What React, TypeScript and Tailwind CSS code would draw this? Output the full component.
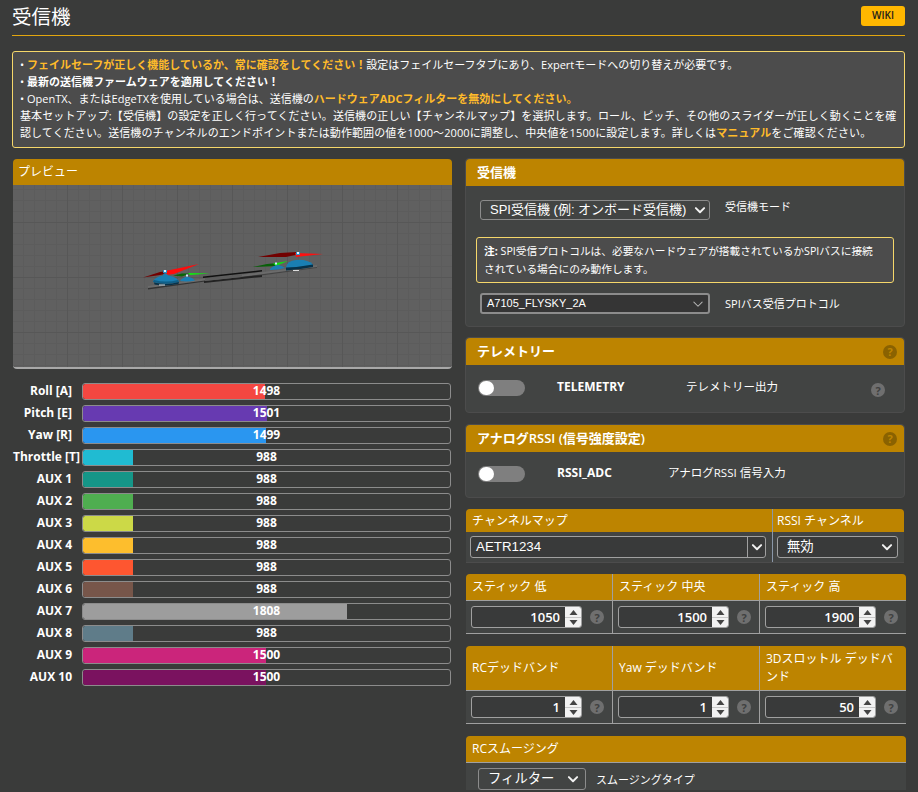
import React from "react";

const FONT = "font-['Open_Sans','Noto_Sans_CJK_JP',sans-serif]";

function Help({ dark = false, className = "" }: { dark?: boolean; className?: string }) {
  return (
    <span
      className={`flex h-[14px] w-[14px] shrink-0 items-center justify-center rounded-full text-[11px] leading-none font-bold ${
        dark ? "bg-[#8a6200] text-[#bd8400]" : "bg-[#6f6f6f] text-[#3f4140]"
      } ${className}`}
    >
      ?
    </span>
  );
}

function Chevron({ thin = false, className = "" }: { thin?: boolean; className?: string }) {
  return (
    <svg viewBox="0 0 16 16" className={`pointer-events-none h-[12px] w-[12px] ${className}`} fill="none">
      <path
        d="M2.5 5.5 8 11l5.5-5.5"
        stroke={thin ? "#b5b5b5" : "#f2f2f2"}
        strokeWidth={thin ? 1.4 : 2.6}
        strokeLinecap="round"
        strokeLinejoin="round"
      />
    </svg>
  );
}

const bars: { label: string; value: number; pct: number; color: string }[] = [
  { label: "Roll [A]", value: 1498, pct: 49.7, color: "bg-[#f44741]" },
  { label: "Pitch [E]", value: 1501, pct: 50.1, color: "bg-[#673ab1]" },
  { label: "Yaw [R]", value: 1499, pct: 49.8, color: "bg-[#2a96f0]" },
  { label: "Throttle [T]", value: 988, pct: 13.5, color: "bg-[#20bbd2]" },
  { label: "AUX 1", value: 988, pct: 13.5, color: "bg-[#159688]" },
  { label: "AUX 2", value: 988, pct: 13.5, color: "bg-[#4fae50]" },
  { label: "AUX 3", value: 988, pct: 13.5, color: "bg-[#ccd947]" },
  { label: "AUX 4", value: 988, pct: 13.5, color: "bg-[#fdbe2d]" },
  { label: "AUX 5", value: 988, pct: 13.5, color: "bg-[#fe5630]" },
  { label: "AUX 6", value: 988, pct: 13.5, color: "bg-[#77564a]" },
  { label: "AUX 7", value: 1808, pct: 71.8, color: "bg-[#9d9d9d]" },
  { label: "AUX 8", value: 988, pct: 13.5, color: "bg-[#5f7c89]" },
  { label: "AUX 9", value: 1500, pct: 49.9, color: "bg-[#cb257b]" },
  { label: "AUX 10", value: 1500, pct: 49.9, color: "bg-[#7a125f]" },
];

function Quad() {
  return (
    <svg viewBox="0 0 200 60" className="absolute left-[117px] top-[55px] h-[60px] w-[200px]">
      {/* frame */}
      <polygon points="18,46 75,38.5 75,41 18,49" fill="#6b6b6b" />
      <polygon points="18,48 75,40.5 75,41.5 18,49.5" fill="#333" />
      <polygon points="110,35 187,25 187,28 110,38" fill="#6b6b6b" />
      <polygon points="110,37 187,27 187,28 110,38.5" fill="#444" />
      <polygon points="73,36.5 132,30 132,31.5 73,38" fill="#111" />
      <polygon points="74,41 132,35 132,37 74,43" fill="#222" />
      <polygon points="75,38.5 112,34.5 112,37 75,41" fill="#5c5c5c" />
      {/* left rear prop */}
      <polygon points="13,37.5 30,32 46,30 44,32 30,35" fill="#730000" />
      <polygon points="33,31.5 69,24 44,34 36,35" fill="#ff0c0c" />
      {/* left rear motor */}
      <path d="M23 42 Q24 37 33 35.5 Q33 33 35 33 Q37 33 38 35.5 Q48 37 49 42 Q36 45 23 42Z" fill="#1a7fb3" />
      <path d="M24 40 Q36 43 48 40 L49 42 Q36 45.5 23 42Z" fill="#0f5f88" />
      <path d="M24 42.5 Q36 45.5 49 42 L48.5 44 Q36 46.5 24.5 44.5Z" fill="#07324a" />
      <rect x="33" y="30" width="4" height="3" fill="#2a92c7" />
      <rect x="34" y="30" width="2" height="2" fill="#e8f4ff" />
      <rect x="29" y="44.5" width="6" height="1" fill="#dddddd" />
      {/* left front prop and motor */}
      <polygon points="43,35.5 52,33.5 60,33.5 52,36.5" fill="#076607" />
      <polygon points="58,33 80,33.5 60,35" fill="#11e811" />
      <path d="M50 41 Q52 37.5 57 36.5 Q63 37.5 65 40.5 Q58 42 50 41Z" fill="#1a7fb3" />
      <rect x="56" y="34.5" width="2" height="2" fill="#cfeeff" />
      {/* right rear prop */}
      <polygon points="128,17 150,13 167,12 170,14 156,17" fill="#720000" />
      <polygon points="165,13 193,14 166,17" fill="#ff1010" />
      {/* right rear motor */}
      <path d="M156 27 Q157 21 166 20 Q177 19 183 24.5 L183 26 Q170 29 156 29Z" fill="#1a7fb3" />
      <path d="M156 27.5 Q170 27 183 24.5 L183 27 Q170 29.5 156 30.5Z" fill="#07324a" />
      <rect x="166" y="12" width="4" height="3" fill="#2a92c7" />
      <rect x="167" y="12" width="2" height="2" fill="#e8f4ff" />
      <rect x="163" y="30" width="6" height="1" fill="#dddddd" />
      {/* right front prop and motor */}
      <polygon points="123,27 137,24 148,23 145,26 135,26.5" fill="#076007" />
      <polygon points="143,23.5 158,21 146,26" fill="#10e010" />
      <path d="M140 29 Q143 25.5 148 25 Q153 26 155 28 Q148 30 140 30Z" fill="#1a7fb3" />
      <rect x="145" y="22.5" width="2" height="2" fill="#cfeeff" />
    </svg>
  );
}

function PanelHeader({ children, help = false }: { children: React.ReactNode; help?: boolean }) {
  return (
    <div className="flex h-[27px] items-center justify-between rounded-t-[4px] bg-[#bd8400] pl-[11px] pr-[7px] text-[13px] leading-none font-semibold text-white">
      <span>{children}</span>
      {help && <Help dark />}
    </div>
  );
}

function Panel({ children, className = "" }: { children: React.ReactNode; className?: string }) {
  return <div className={`w-[440px] rounded-[4px] border border-[#4c4c4c] bg-[#424443] ${className}`}>{children}</div>;
}

function Toggle() {
  return (
    <span className="flex h-[16px] w-[47px] shrink-0 items-center rounded-full bg-[#7f7f7f] pl-[1px]">
      <span className="h-[14px] w-[15px] rounded-full bg-white" />
    </span>
  );
}

function SwitchRow({ name, desc, nameW, help = false, pt }: { name: string; desc: string; nameW: string; help?: boolean; pt: string }) {
  return (
    <div className={`flex items-start pl-[12px] ${pt}`}>
      <Toggle />
      <span className={`-mt-[1px] ml-[32px] ${nameW} text-[12px] leading-[16px] font-bold text-white`}>{name}</span>
      <span className="-mt-[1px] text-[11.5px] leading-[16px] text-white">{desc}</span>
      {help && <Help className="ml-auto mr-[19px] mt-[3px]" />}
    </div>
  );
}

function NumberCell({ value, border = false }: { value: number; border?: boolean }) {
  return (
    <div className={`flex flex-1 items-center gap-[8px] pl-[5px] ${border ? "border-l border-[#a0a0a0]" : ""}`}>
      <div className="flex h-[22px] w-[111px] items-center justify-end overflow-hidden rounded-[3px] border border-[#a0a0a0] bg-[#393a3a] text-[13px] leading-none font-['Open_Sans',sans-serif] font-semibold text-white">
        <span className="pr-[5px]">{value}</span>
        <span className="flex h-full w-[16px] shrink-0 flex-col items-center justify-center gap-[2px] bg-[#f2f2f2]">
          <svg viewBox="0 0 8 5" className="h-[5px] w-[9px]"><path d="M4 0l4 5H0z" fill="#444" /></svg>
          <span className="h-px w-full bg-[#c8c8c8]" />
          <svg viewBox="0 0 8 5" className="h-[5px] w-[9px]"><path d="M4 5l4-5H0z" fill="#444" /></svg>
        </span>
      </div>
      <Help />
    </div>
  );
}

function NumberTable({ heads, values, headH }: { heads: string[]; values: number[]; headH: string }) {
  return (
    <div className="ml-[1px] w-[440px] overflow-hidden rounded-t-[4px] border-b border-[#a0a0a0] bg-[#424443]">
      <div className={`flex ${headH} border-b border-[#a0a0a0] bg-[#bd8400]`}>
        {heads.map((h, i) => (
          <div
            key={h}
            className={`flex flex-1 items-center pl-[6px] pr-[3px] text-[12px] leading-[18px] text-white ${i ? "border-l border-[#a0a0a0]" : ""}`}
          >
            {h}
          </div>
        ))}
      </div>
      <div className="flex h-[32px]">
        {values.map((v, i) => (
          <NumberCell key={i} value={v} border={i > 0} />
        ))}
      </div>
    </div>
  );
}

export default function App() {
  return (
    <div className={`h-[792px] w-[918px] overflow-hidden bg-[#3a3b3a] ${FONT}`}>
      <div className="ml-[12px] mr-[13px] flex h-[36px] items-center justify-between border-b border-[#e2a60e] pb-[2px]">
        <h1 className="text-[19.5px] leading-none font-normal text-white">受信機</h1>
        <span className="mb-[2px] flex h-[20px] w-[44px] items-center justify-center rounded-[3px] bg-[#ffb700] text-[10px] font-semibold text-[#1b1b1b]">
          WIKI
        </span>
      </div>

      <div className="ml-[12px] mr-[13px] mt-[15px] h-[97px] rounded-[3px] border border-[#f5d76a] bg-[#4c4c4c] px-[7px] pt-[4px] text-[11px] leading-[17px] text-white">
        <p className="whitespace-nowrap">
          {"• "}<b className="text-[#ffbb2a]">フェイルセーフが正しく機能しているか、常に確認をしてください！</b>設定はフェイルセーフタブにあり、Expertモードへの切り替えが必要です。
        </p>
        <p className="whitespace-nowrap">
          {"• "}<b>最新の送信機ファームウェアを適用してください！</b>
        </p>
        <p className="whitespace-nowrap">
          {"• "}OpenTX、またはEdgeTXを使用している場合は、送信機の<b className="text-[#ffbb2a]">ハードウェアADCフィルターを無効にしてください。</b>
        </p>
        <p className="tracking-[0.1px]">
          基本セットアップ:【受信機】の設定を正しく行ってください。送信機の正しい【チャンネルマップ】を選択します。ロール、ピッチ、その他のスライダーが正しく動くことを確認してください。送信機のチャンネルのエンドポイントまたは動作範囲の値を1000～2000に調整し、中央値を1500に設定します。詳しくは<b className="text-[#ffbb2a]">マニュアル</b>をご確認ください。
        </p>
      </div>

      <div className="mt-[11px] flex gap-[13px] pl-[13px]">
        {/* left column */}
        <div className="w-[439px] shrink-0">
          <div className="overflow-hidden rounded-[4px] border-b-2 border-[#a8a8a8]">
            <div className="flex h-[26px] items-center bg-[#bd8400] pl-[5px] text-[12px] leading-none text-white">プレビュー</div>
            <div className="relative h-[182px] bg-[#606060] bg-[linear-gradient(#575757_1px,transparent_1px),linear-gradient(90deg,#575757_1px,transparent_1px),linear-gradient(#5c5c5c_1px,transparent_1px),linear-gradient(90deg,#5c5c5c_1px,transparent_1px)] bg-[length:55px_55px,55px_55px,11px_11px,11px_11px] bg-[position:54px_37px]">
              <Quad />
            </div>
          </div>

          <div className="mt-[13px] flex flex-col gap-[4px]">
            {bars.map((b) => (
              <div key={b.label} className="flex h-[18px] items-center">
                <span className="w-[59px] shrink-0 text-right text-[12px] leading-none font-bold whitespace-nowrap text-white">
                  {b.label}
                </span>
                <div className="relative ml-[10px] mr-[1px] h-[17px] min-w-0 flex-1 overflow-hidden rounded-[3px] border border-[#8c8c8c] bg-[#3a3b3a]">
                  <div className={`h-full rounded-l-[2px] ${b.color}`} style={{ width: `${b.pct}%` }} />
                  <span className="absolute inset-0 flex items-center justify-center text-[12px] leading-none font-bold text-white">
                    {b.value}
                  </span>
                </div>
              </div>
            ))}
          </div>
        </div>

        {/* right column */}
        <div className="-mt-[1px] flex w-[441px] shrink-0 flex-col">
          <Panel className="h-[169px]">
            <PanelHeader>受信機</PanelHeader>
            <div className="flex items-start pl-[14px] pt-[14px]">
              <div className="relative h-[20px] w-[230px] rounded-[3px] border border-[#8c8c8c] bg-[#424443] pl-[9px] text-[13px] leading-[18px] font-['Liberation_Sans','Noto_Sans_CJK_JP',sans-serif] whitespace-nowrap text-white">
                SPI受信機 (例: オンボード受信機)
                <Chevron className="absolute right-[3px] top-[3px]" />
              </div>
              <span className="ml-[15px] text-[11px] leading-[14px] text-white">受信機モード</span>
            </div>
            <div className="mx-[10px] mt-[17px] h-[46px] rounded-[3px] border border-[#f5d76a] bg-[#4c4c4c] px-[7px] pt-[4px] text-[10.7px] leading-[18px] text-white">
              <b>注:</b> SPI受信プロトコルは、必要なハードウェアが搭載されているかSPIバスに接続
              <br />
              されている場合にのみ動作します。
            </div>
            <div className="flex items-center pl-[14px] pt-[10px]">
              <div className="relative flex h-[21px] w-[230px] items-center rounded-[3px] border-2 border-[#8c8c8c] bg-[#353535] pl-[5px] text-[11px] font-['Liberation_Sans','Noto_Sans_CJK_JP',sans-serif] whitespace-nowrap text-white">
                A7105_FLYSKY_2A
                <Chevron thin className="absolute right-[4px] top-[3px]" />
              </div>
              <span className="ml-[15px] text-[11px] leading-none text-white">SPIバス受信プロトコル</span>
            </div>
          </Panel>

          <Panel className="mt-[10px] h-[76px]">
            <PanelHeader help>テレメトリー</PanelHeader>
            <SwitchRow name="TELEMETRY" desc="テレメトリー出力" nameW="w-[129px]" help pt="pt-[15px]" />
          </Panel>

          <Panel className="mt-[11px] h-[74px]">
            <PanelHeader help>アナログRSSI (信号強度設定)</PanelHeader>
            <SwitchRow name="RSSI_ADC" desc="アナログRSSI 信号入力" nameW="w-[111px]" pt="pt-[14px]" />
          </Panel>

          <div className="ml-[1px] mt-[11px] flex h-[54px] w-[438px] overflow-hidden rounded-t-[4px] border-b border-[#4c4c4c] bg-[#424443]">
            <div className="w-[306px] shrink-0">
              <div className="flex h-[23px] items-center bg-[#bd8400] pl-[6px] text-[12px] leading-none text-white">チャンネルマップ</div>
              <div className="px-[4px] pt-[4px]">
                <div className="flex h-[22px] w-[296px] items-center rounded-[3px] border border-[#a0a0a0] bg-[#393a3a] pl-[5px] text-[13.33px] font-['Liberation_Sans',sans-serif] text-white">
                  <span className="flex-1">AETR1234</span>
                  <span className="flex h-full w-[18px] items-center justify-center border-l border-[#a0a0a0]">
                    <Chevron />
                  </span>
                </div>
              </div>
            </div>
            <div className="flex-1 border-l border-[#8a97a8]">
              <div className="flex h-[23px] items-center bg-[#bd8400] pl-[4px] text-[12px] leading-none whitespace-nowrap text-white">RSSI チャンネル</div>
              <div className="pl-[4px] pt-[4px]">
                <div className="relative flex h-[22px] w-[121px] items-center rounded-[3px] border border-[#a0a0a0] bg-[#393a3a] pl-[9px] text-[13.33px] font-['Liberation_Sans','Noto_Sans_CJK_JP',sans-serif] text-white">
                  無効
                  <Chevron className="absolute right-[4px] top-[4px]" />
                </div>
              </div>
            </div>
          </div>

          <div className="mt-[11px]">
            <NumberTable heads={["スティック 低", "スティック 中央", "スティック 高"]} values={[1050, 1500, 1900]} headH="h-[27px]" />
          </div>
          <div className="mt-[12px]">
            <NumberTable heads={["RCデッドバンド", "Yaw デッドバンド", "3Dスロットル デッドバンド"]} values={[1, 1, 50]} headH="h-[45px]" />
          </div>

          <div className="ml-[1px] mt-[12px] w-[440px] overflow-hidden rounded-t-[4px] bg-[#424443]">
            <div className="flex h-[27px] items-center border-b border-[#a0a0a0] bg-[#bd8400] pl-[6px] text-[12px] leading-none text-white">RCスムージング</div>
            <div className="flex items-center pl-[12px] pt-[5px]">
              <div className="relative flex h-[22px] w-[108px] items-center rounded-[3px] border border-[#8c8c8c] pl-[9px] text-[13.33px] text-white font-['Liberation_Sans','Noto_Sans_CJK_JP',sans-serif]">
                フィルター
                <Chevron className="absolute right-[6px] top-[4px]" />
              </div>
              <span className="ml-[10px] text-[11px] leading-none text-white">スムージングタイプ</span>
            </div>
          </div>
        </div>
      </div>
    </div>
  );
}
